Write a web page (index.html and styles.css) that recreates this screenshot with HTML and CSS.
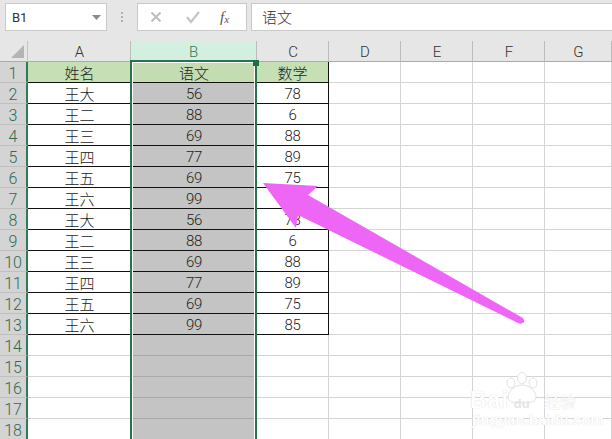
FILE: index.html
```html
<!DOCTYPE html>
<html lang="zh-CN">
<head>
<meta charset="utf-8">
<title>Excel</title>
<link rel="stylesheet" href="styles.css">
</head>
<body>
<div class="toolbar">
  <div class="namebox"><span>B1</span><svg class="caret" width="9" height="5" viewBox="0 0 9 5"><path d="M0 0h9L4.500 5z"/></svg></div>
  <div class="dots"><i></i><i></i><i></i></div>
  <div class="fbuttons">
    <svg width="14" height="14" viewBox="0 0 14 14"><path d="M2.500 2.500l9 9M11.500 2.500l-9 9" stroke="#bdbdbd" stroke-width="2" fill="none"/></svg>
    <svg width="16" height="14" viewBox="0 0 16 14"><path d="M2 7l4 5 8-10" stroke="#c4c4c4" stroke-width="2.200" fill="none"/></svg>
    <span class="fx">f<sub>x</sub></span>
  </div>
  <div class="finput">语文</div>
</div>
<div class="sheet">
  <div class="row head">
    <div class="corner"><svg width="15" height="15" viewBox="0 0 15 15"><path d="M14 1v13H1z" fill="#b4b4b4"/></svg></div>
    <div class="ch">A</div><div class="ch on">B</div><div class="ch">C</div><div class="ch">D</div><div class="ch">E</div><div class="ch">F</div><div class="ch">G</div>
  </div>
  <div class="row"><div class="rh">1</div><div class="d t">姓名</div><div class="d t b">语文</div><div class="d t e">数学</div><div class="c"></div><div class="c"></div><div class="c"></div><div class="c"></div></div>
  <div class="row"><div class="rh">2</div><div class="d n">王大</div><div class="d g">56</div><div class="d e">78</div><div class="c"></div><div class="c"></div><div class="c"></div><div class="c"></div></div>
  <div class="row"><div class="rh">3</div><div class="d n">王二</div><div class="d g">88</div><div class="d e">6</div><div class="c"></div><div class="c"></div><div class="c"></div><div class="c"></div></div>
  <div class="row"><div class="rh">4</div><div class="d n">王三</div><div class="d g">69</div><div class="d e">88</div><div class="c"></div><div class="c"></div><div class="c"></div><div class="c"></div></div>
  <div class="row"><div class="rh">5</div><div class="d n">王四</div><div class="d g">77</div><div class="d e">89</div><div class="c"></div><div class="c"></div><div class="c"></div><div class="c"></div></div>
  <div class="row"><div class="rh">6</div><div class="d n">王五</div><div class="d g">69</div><div class="d e">75</div><div class="c"></div><div class="c"></div><div class="c"></div><div class="c"></div></div>
  <div class="row"><div class="rh">7</div><div class="d n">王六</div><div class="d g">99</div><div class="d e">85</div><div class="c"></div><div class="c"></div><div class="c"></div><div class="c"></div></div>
  <div class="row"><div class="rh">8</div><div class="d n">王大</div><div class="d g">56</div><div class="d e">78</div><div class="c"></div><div class="c"></div><div class="c"></div><div class="c"></div></div>
  <div class="row"><div class="rh">9</div><div class="d n">王二</div><div class="d g">88</div><div class="d e">6</div><div class="c"></div><div class="c"></div><div class="c"></div><div class="c"></div></div>
  <div class="row"><div class="rh">10</div><div class="d n">王三</div><div class="d g">69</div><div class="d e">88</div><div class="c"></div><div class="c"></div><div class="c"></div><div class="c"></div></div>
  <div class="row"><div class="rh">11</div><div class="d n">王四</div><div class="d g">77</div><div class="d e">89</div><div class="c"></div><div class="c"></div><div class="c"></div><div class="c"></div></div>
  <div class="row"><div class="rh">12</div><div class="d n">王五</div><div class="d g">69</div><div class="d e">75</div><div class="c"></div><div class="c"></div><div class="c"></div><div class="c"></div></div>
  <div class="row"><div class="rh">13</div><div class="d n">王六</div><div class="d g">99</div><div class="d e">85</div><div class="c"></div><div class="c"></div><div class="c"></div><div class="c"></div></div>
  <div class="row"><div class="rh">14</div><div class="c"></div><div class="c g2"></div><div class="c"></div><div class="c"></div><div class="c"></div><div class="c"></div><div class="c"></div></div>
  <div class="row"><div class="rh">15</div><div class="c"></div><div class="c g2"></div><div class="c"></div><div class="c"></div><div class="c"></div><div class="c"></div><div class="c"></div></div>
  <div class="row"><div class="rh">16</div><div class="c"></div><div class="c g2"></div><div class="c"></div><div class="c"></div><div class="c"></div><div class="c"></div><div class="c"></div></div>
  <div class="row"><div class="rh">17</div><div class="c"></div><div class="c g2"></div><div class="c"></div><div class="c"></div><div class="c"></div><div class="c"></div><div class="c"></div></div>
  <div class="row"><div class="rh">18</div><div class="c"></div><div class="c g2"></div><div class="c"></div><div class="c"></div><div class="c"></div><div class="c"></div><div class="c"></div></div>
  <div class="selection"><span class="handle"></span></div>
</div>
<svg class="arrow" width="612" height="439" viewBox="0 0 612 439">
  <path d="M263 183L318 186L308 195L522 317.500Q525.500 320 523.500 322.500Q521 324.500 518 323L298 215L296 228Z" fill="#ee66f6"/>
</svg>
<div class="watermark">
  <svg class="paw" width="36" height="32" viewBox="0 0 36 32">
    <g fill="#fff" stroke="#e2e2e2" stroke-width="1">
      <ellipse cx="18" cy="6" rx="4.500" ry="5.500"/>
      <ellipse cx="7" cy="11" rx="4" ry="5"/>
      <ellipse cx="29" cy="11" rx="4" ry="5"/>
      <path d="M18 13c7 0 14 6 14 12 0 5-5 6-14 6s-14-1-14-6c0-6 7-12 14-12z"/>
    </g>
  </svg>
  <div class="wm-main"><span class="bai">Bai</span><span class="du">du</span><span class="jy">经验</span></div>
  <div class="wm-url">jingyan.baidu.com</div>
</div>
</body>
</html>
```

FILE: styles.css
```css
* { box-sizing: border-box; }
html, body { margin: 0; height: 100%; overflow: hidden; }
body {
  position: relative;
  width: 612px;
  height: 439px;
  background: #e6e6e6;
  font-family: Roboto, "Noto Sans CJK SC", sans-serif;
  color: #222;
}
.toolbar {
  display: flex;
  height: 41px;
  padding: 3px 0 10px 5px;
  background: #e6e6e6;
}
.namebox {
  display: flex;
  align-items: center;
  justify-content: space-between;
  width: 102px;
  padding: 0 5px 0 6px;
  background: #fff;
  border: 1px solid #c9c9c9;
  font-size: 13px;
  color: #333;
}
.caret path { fill: #8a8a8a; }
.dots {
  display: flex;
  flex-direction: column;
  justify-content: center;
  gap: 2px;
  width: 30px;
  align-items: center;
}
.dots i { width: 2px; height: 2px; background: #b0b0b0; }
.fbuttons {
  display: flex;
  align-items: center;
  gap: 22px;
  width: 110px;
  padding-left: 11px;
  background: #fff;
  border: 1px solid #c9c9c9;
}
.fx {
  margin-left: -3px;
  font: italic 15px "Liberation Serif", serif;
  color: #555;
}
.fx sub { font-size: 11px; vertical-align: -1px; }
.finput {
  flex: 1;
  margin-left: 4px;
  padding-left: 10px;
  background: #fff;
  border: 1px solid #c9c9c9;
  border-right: 0;
  font: 300 15px/25px "Noto Sans CJK SC", sans-serif;
  color: #333;
}
.sheet {
  position: relative;
  height: 398px;
  overflow: hidden;
}
.row {
  display: grid;
  grid-template-columns: 28px 103px 126px 72px 72px 72px 72px 67px;
  grid-template-rows: 21px;
  height: 21px;
}
.head { background: #e6e6e6; }
.corner {
  display: flex;
  align-items: flex-end;
  justify-content: flex-end;
  padding: 0 2px 2px 0;
  border-right: 1px solid #c4c4c4;
  border-bottom: 1px solid #ababab;
}
.ch {
  border-right: 1px solid #bcbcbc;
  border-bottom: 1px solid #ababab;
  padding: 1px 0 0 1px;
  text-align: center;
  font-weight: 300;
  font-size: 15px;
  line-height: 21px;
  color: #333;
}
.ch.on { background: #d2efe0; color: #2f7a58; padding-left: 0; }
.rh {
  background: #d4d4d4;
  border-bottom: 1px solid #c0c0c0;
  border-right: 2px solid #2f7a58;
  padding-top: 1px;
  text-align: center;
  font-weight: 300;
  font-size: 16px;
  line-height: 21px;
  color: #2f6a52;
}
.c {
  background: #fff;
  border-right: 1px solid #d4d4d4;
  border-bottom: 1px solid #d4d4d4;
}
.d {
  overflow: hidden;
  background: #fff;
  border-bottom: 1px solid #111;
  padding-top: 1px;
  text-align: center;
  font: 300 15px/20px Roboto, sans-serif;
  letter-spacing: -.4px;
  color: #222;
}
.d.e { border-right: 1px solid #111; }
.d.t, .d.n {
  font: 300 15px/20px "Noto Sans CJK SC", sans-serif;
  letter-spacing: 0;
}
.d.t { background: #c6e0b4; }
.d.g { background: #c4c4c4; }
.d.b { background: #c4dcb2; }
.c.g2 {
  background: #c4c4c4;
  border-right: 0;
  border-bottom-color: #a9a9a9;
}
.selection {
  position: absolute;
  top: 19px;
  left: 130px;
  width: 127px;
  height: 400px;
  border: 2px solid #2a7150;
  box-shadow: inset 0 0 0 1px #fff;
}
.handle {
  position: absolute;
  top: -2px;
  right: -4px;
  width: 6px;
  height: 6px;
  background: #1f6e4a;
}
.arrow { position: absolute; top: 0; left: 0; }
.watermark {
  position: absolute;
  top: 372px;
  left: 470px;
  width: 112px;
  height: 56px;
  color: #fff;
}
.paw { position: absolute; top: 0; left: 34px; }
.wm-main {
  position: absolute;
  top: 18px;
  left: 0;
  display: flex;
  align-items: baseline;
  height: 20px;
  font: 700 23px/20px "Liberation Sans", sans-serif;
  letter-spacing: 1px;
  text-shadow: 0 0 1px #ccc;
}
.du { margin-left: 5px; font-size: 13px; letter-spacing: 0; color: #e4e4e4; text-shadow: none; }
.jy {
  margin-left: 14px;
  font: 16px/16px "Noto Sans CJK SC", sans-serif;
  letter-spacing: 0;
}
.wm-url {
  position: absolute;
  top: 40px;
  left: 2px;
  font: 700 15px/15px "Liberation Sans", sans-serif;
  text-shadow: 0 0 1px #ccc;
}
```
